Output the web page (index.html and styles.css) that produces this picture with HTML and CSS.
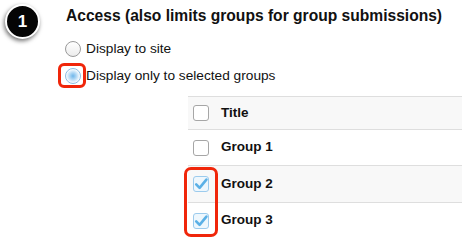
FILE: index.html
```html
<!DOCTYPE html>
<html>
<head>
<meta charset="utf-8">
<link rel="stylesheet" href="styles.css">
</head>
<body>
<div class="page">
  <div class="badge">1</div>
  <div class="content">
    <h2 class="heading">Access (also limits groups for group submissions)</h2>
    <div class="options">
      <label class="option"><span class="radio"></span><span>Display to site</span></label>
      <label class="option"><span class="radio radio-on"><span class="hl hl-radio"></span></span><span>Display only to selected groups</span></label>
    </div>
    <div class="table">
      <div class="row row-head"><span class="check"></span><span class="cell">Title</span></div>
      <div class="row row-plain"><span class="check"></span><span class="cell">Group 1</span></div>
      <div class="row row-alt"><span class="check check-on"><span class="hl hl-checks"></span><svg viewBox="0 0 16 16" width="16" height="16"><path d="M3.2 8.4 L6.6 11.8 L13.4 3.6" fill="none" stroke="#5bb0e6" stroke-width="2.6" stroke-linecap="round" stroke-linejoin="round"/></svg></span><span class="cell">Group 2</span></div>
      <div class="row row-plain"><span class="check check-on"><svg viewBox="0 0 16 16" width="16" height="16"><path d="M3.2 8.4 L6.6 11.8 L13.4 3.6" fill="none" stroke="#5bb0e6" stroke-width="2.6" stroke-linecap="round" stroke-linejoin="round"/></svg></span><span class="cell">Group 3</span></div>
    </div>
  </div>
</div>
</body>
</html>
```
FILE: styles.css
```css
html, body {
  margin: 0;
  padding: 0;
  background: #ffffff;
}
body {
  font-family: "Liberation Sans", Arial, sans-serif;
  color: #111;
  width: 462px;
  height: 249px;
  overflow: hidden;
}
.page {
  display: flex;
  align-items: flex-start;
  padding: 4px 0 0 5px;
}
.badge {
  flex: none;
  width: 31px;
  height: 31px;
  border-radius: 50%;
  background: #050505;
  border: 2px solid #fff;
  box-shadow: -1px 2px 4px rgba(0,0,0,0.55);
  color: #fff;
  font-weight: bold;
  font-size: 17px;
  line-height: 31px;
  text-align: center;
}
.content {
  flex: 1;
  margin-left: 24px;
  padding-top: 3px;
  display: flex;
  flex-direction: column;
}
.heading {
  margin: 0 0 0 2px;
  font-size: 15.6px;
  line-height: 18px;
  height: 18px;
  white-space: nowrap;
  font-weight: bold;
  color: #111;
}
.options {
  display: flex;
  flex-direction: column;
  gap: 11px;
  margin-top: 16px;
  padding-left: 1px;
}
.option {
  display: flex;
  align-items: center;
  height: 16px;
  gap: 5px;
  font-size: 13.7px;
  line-height: 16px;
  color: #111;
}
.radio {
  position: relative;
  flex: none;
  width: 14px;
  height: 14px;
  border-radius: 50%;
  border: 1px solid #9a9a9a;
  background: linear-gradient(#ffffff, #ececec);
}
.radio-on {
  border-color: #8cbde3;
  background: radial-gradient(circle, #6fb6ea 0, #a9d4f3 3px, #e9f4fc 6px, #ffffff 7px);
}
.hl {
  position: absolute;
  border: 3px solid #f0260a;
  border-radius: 6px;
  box-sizing: border-box;
}
.hl-radio {
  left: -8px;
  top: -6px;
  width: 28px;
  height: 25px;
}
.table {
  margin-left: 124px;
  margin-top: 12px;
  display: flex;
  flex-direction: column;
}
.row {
  display: flex;
  align-items: center;
  padding-left: 5px;
  gap: 12px;
}
.row-plain {
  height: 35px;
}
.row-head {
  height: 32px;
  background: #f8f8f8;
  border-top: 1px solid #dedede;
  border-bottom: 1px solid #dedede;
}
.row-alt {
  height: 36px;
  background: #f8f8f8;
  border-top: 1px solid #dedede;
  border-bottom: 1px solid #dedede;
}
.cell {
  font-size: 13.5px;
  font-weight: bold;
  color: #111;
  margin-bottom: 2px;
}
.check {
  position: relative;
  flex: none;
  width: 14px;
  height: 14px;
  border: 1px solid #a6a6a6;
  border-radius: 3px;
  background: #fff;
}
.check-on {
  border-color: #9ccbed;
  background: #eef7fd;
}
.check-on svg {
  position: absolute;
  left: -1px;
  top: -1px;
}
.hl-checks {
  left: -10px;
  top: -10px;
  width: 34px;
  height: 70px;
  border-radius: 7px;
}
```
